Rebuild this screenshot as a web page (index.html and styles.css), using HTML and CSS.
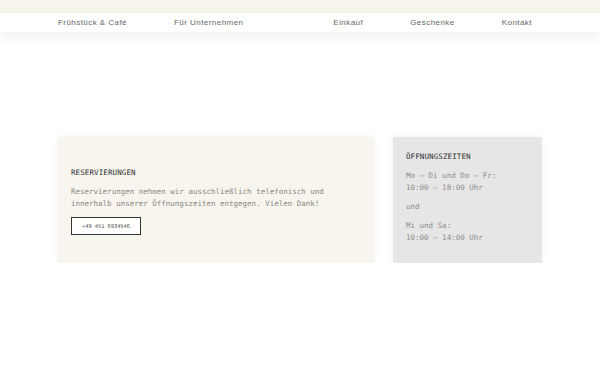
FILE: index.html
```html
<!DOCTYPE html>
<html lang="de">
<head>
    <meta charset="UTF-8">
    <meta name="viewport" content="width=device-width, initial-scale=1.0">
    <title>Reservierungen</title>
    <link rel="stylesheet" href="styles.css">
</head>
<body>
    <div class="topbar"></div>
    <nav class="nav">
        <div class="nav-inner">
            <div class="nav-group">
                <a href="#">Frühstück &amp; Café</a>
                <a href="#">Für Unternehmen</a>
            </div>
            <div class="nav-group">
                <a href="#">Einkauf</a>
                <a href="#">Geschenke</a>
                <a href="#">Kontakt</a>
            </div>
        </div>
    </nav>

    <main class="container">
        <section class="card card-reserve">
            <div class="card-body">
                <h2>RESERVIERUNGEN</h2>
                <p>Reservierungen nehmen wir ausschließlich telefonisch und<br>innerhalb unserer Öffnungszeiten entgegen. Vielen Dank!</p>
                <a class="phone" href="#">+49 451 6934546</a>
            </div>
        </section>
        <section class="card card-hours">
            <h2>ÖFFNUNGSZEITEN</h2>
            <p>Mo – Di und Do – Fr:<br>10:00 – 18:00 Uhr</p>
            <p>und</p>
            <p>Mi und Sa:<br>10:00 – 14:00 Uhr</p>
        </section>
    </main>
</body>
</html>
```

FILE: styles.css
```css
* {
    box-sizing: border-box;
    margin: 0;
    padding: 0;
}

body {
    background-color: #fff;
    font-family: 'DejaVu Sans Mono', monospace;
    color: #333;
}

.topbar {
    height: 13px;
    background-color: #f7f4ec;
}

.nav {
    background-color: #fff;
    box-shadow: 0 6px 14px rgba(0, 0, 0, 0.06);
    position: relative;
}

.nav-inner {
    max-width: 484px;
    margin: 0 auto;
    padding: 3px 10px 4px 0;
    height: 19px;
    display: flex;
    justify-content: space-between;
    align-items: center;
}

.nav-group {
    display: flex;
    gap: 47px;
}

.nav a {
    font-family: 'Liberation Sans', Arial, sans-serif;
    font-size: 8px;
    color: #666;
    text-decoration: none;
    letter-spacing: 0.45px;
}

.container {
    max-width: 484px;
    margin: 105px auto 0;
    display: flex;
    gap: 19px;
}

.card {
    height: 126px;
    border-radius: 2px;
    box-shadow: 0 0 6px rgba(0, 0, 0, 0.06);
}

.card h2 {
    font-size: 7.5px;
    font-weight: normal;
    color: #2e2e2e;
    letter-spacing: 0.1px;
}

.card p {
    font-size: 7.5px;
    line-height: 12px;
}

.card-reserve {
    width: 316px;
    background-color: #f8f5ee;
    display: flex;
    align-items: center;
    padding: 3px 13px 0;
}

.card-reserve h2 {
    margin-bottom: 9px;
}

.card-reserve p {
    color: #8a8680;
    margin-bottom: 3px;
}

.phone {
    display: inline-block;
    border: 1px solid #333;
    background-color: #fff;
    color: #444;
    font-size: 5.3px;
    text-decoration: none;
    width: 70px;
    height: 18px;
    line-height: 16px;
    text-align: center;
}

.card-hours {
    width: 149px;
    background-color: #e6e6e6;
    padding: 15px 13px;
}

.card-hours h2 {
    margin-bottom: 9px;
}

.card-hours p {
    color: #8c8c8c;
    margin-bottom: 7px;
}
```
